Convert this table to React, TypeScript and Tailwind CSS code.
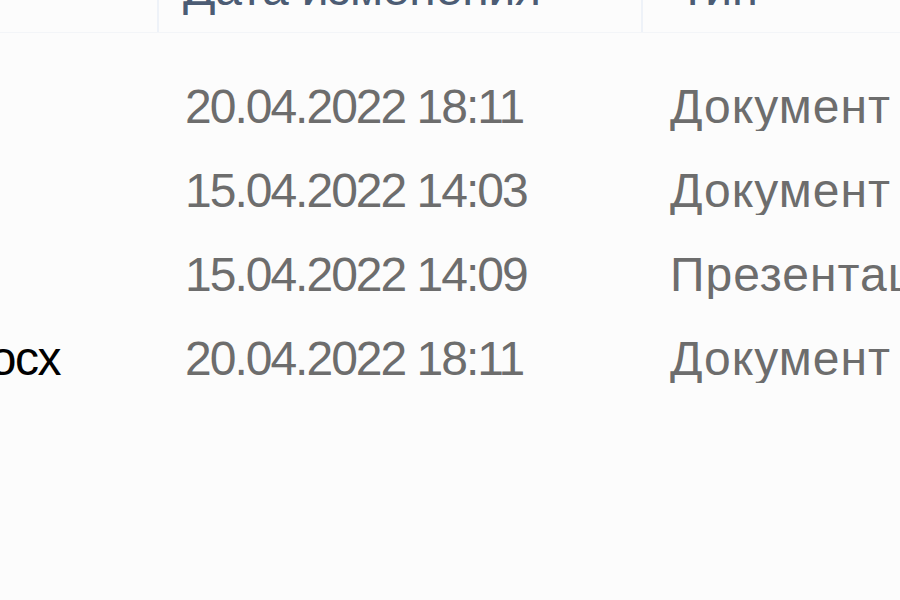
import React from "react";

const rows = [
  { name: "", date: "20.04.2022 18:11", type: "Документ" },
  { name: "", date: "15.04.2022 14:03", type: "Документ" },
  { name: "", date: "15.04.2022 14:09", type: "Презентация" },
  { name: "Отчет.docx", date: "20.04.2022 18:11", type: "Документ" },
];

export default function App() {
  return (
    <div
      className="w-[900px] h-[600px] overflow-hidden bg-[#fcfcfc]"
      style={{ fontFamily: '"Liberation Sans", "DejaVu Sans", sans-serif' }}
    >
      {/* header */}
      <div className="flex h-[33px] border-b border-[#f3f5f8] overflow-hidden">
        <div className="w-[159px] border-r-2 border-[#eef2f8]" />
        <div className="w-[484px] border-r-2 border-[#eef2f8] pl-[24px] overflow-hidden">
          <div className="mt-[-35px] text-[48px] leading-[48px] tracking-[-0.2px] text-[#4c5c74] whitespace-nowrap">
            Дата изменения
          </div>
        </div>
        <div className="flex-1 pl-[35px] overflow-hidden">
          <div className="mt-[-35px] text-[48px] leading-[48px] tracking-[0px] text-[#4c5c74] whitespace-nowrap">
            Тип
          </div>
        </div>
      </div>
      <div className="h-[32px]" />
      {rows.map((r, i) => (
        <div key={i} className="flex h-[84px] items-center">
          <div className="w-[160px] flex justify-end pr-[100px] overflow-hidden">
            <span className="text-[48px] leading-[48px] tracking-[-1.5px] text-black whitespace-nowrap">
              {r.name}
            </span>
          </div>
          <div className="w-[483px] pl-[25px] text-[48px] leading-[48px] tracking-[-2px] text-[#6d6d6d] whitespace-nowrap overflow-hidden">
            {r.date}
          </div>
          <div className="flex-1 pl-[27px] text-[48px] leading-[48px] tracking-[1px] text-[#6d6d6d] whitespace-nowrap overflow-hidden">
            {r.type}
          </div>
        </div>
      ))}
    </div>
  );
}
